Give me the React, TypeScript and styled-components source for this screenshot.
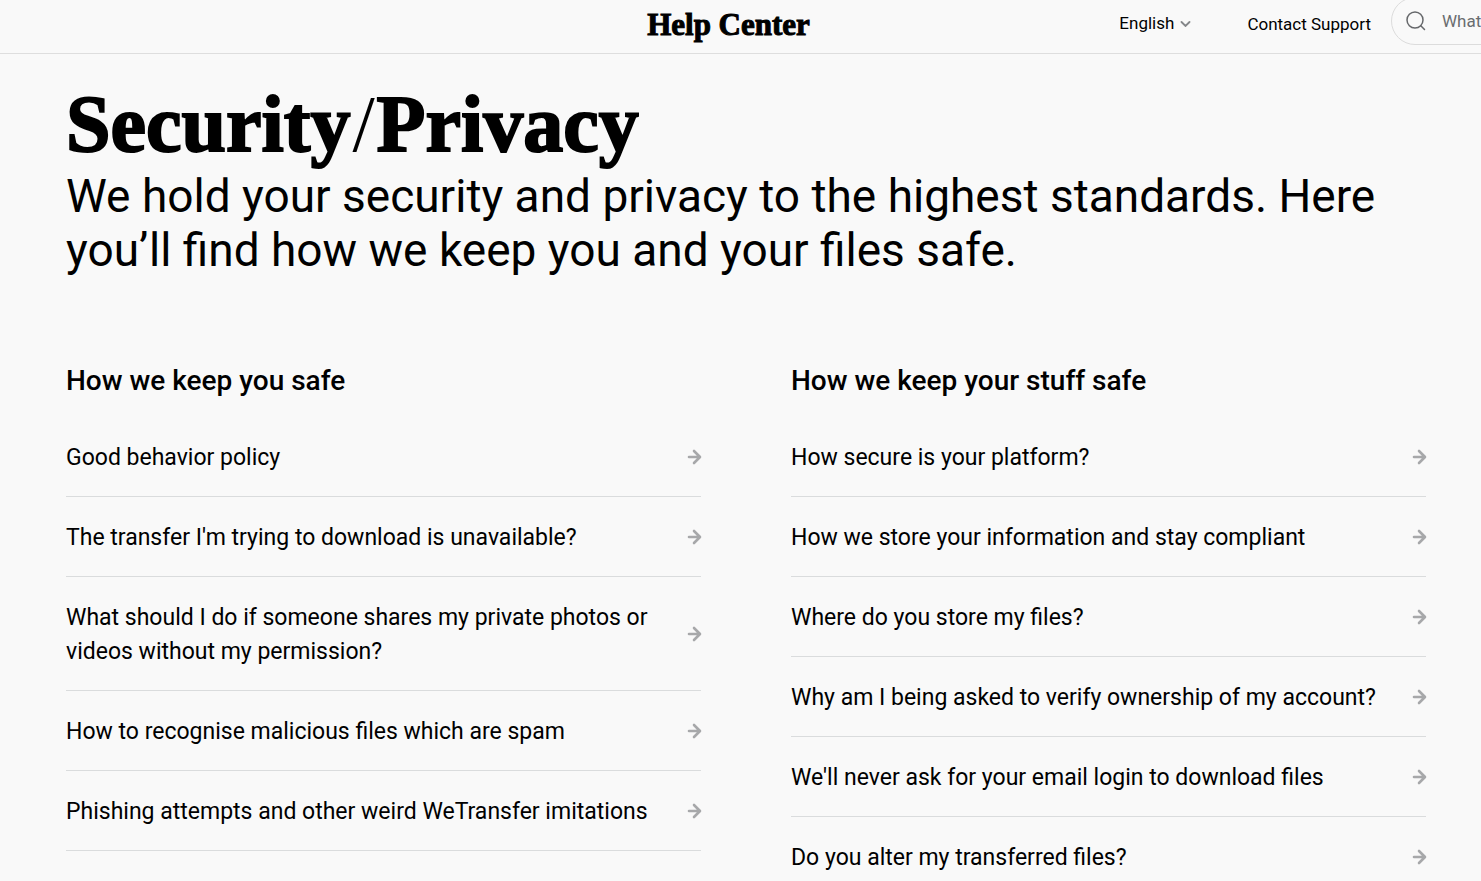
import React from "react";
import styled, { createGlobalStyle } from "styled-components";

const sans = `Roboto, "Liberation Sans", sans-serif`;
const serif = `"Liberation Serif", serif`;

const GlobalStyle = createGlobalStyle`
  *, *::before, *::after { box-sizing: border-box; }
  body {
    margin: 0;
    background: #f9f9f9;
    color: #000;
    font-family: ${sans};
    overflow-x: hidden;
  }
  h1, h2, p, ul { margin: 0; padding: 0; }
  a { color: inherit; text-decoration: none; }
`;

const Header = styled.header`
  display: grid;
  grid-template-columns: 1fr auto 1fr;
  align-items: center;
  align-content: start;
  height: 54px;
  padding-right: 24px;
  border-bottom: 1px solid #dedede;
  overflow: hidden;
`;

const Logo = styled.a`
  grid-column: 2;
  font: 700 31px/36px ${serif};
  -webkit-text-stroke: 1px #000;
  padding-top: 4px;
`;

const Tools = styled.div`
  display: flex;
  align-items: center;
  justify-content: flex-end;
  margin: -3px -224px 0 0;
  font-size: 17px;
  line-height: 20px;
`;

const Language = styled.button`
  display: flex;
  align-items: center;
  gap: 6px;
  margin: 4px 56px 0 0;
  padding: 0;
  border: 0;
  background: none;
  color: #000;
  font: inherit;
  white-space: nowrap;
`;

const Contact = styled.a`
  margin: 6px 20px 0 0;
  white-space: nowrap;
`;

const Search = styled.label`
  display: flex;
  flex: 0 0 290px;
  align-items: center;
  gap: 16px;
  height: 48px;
  padding-left: 14px;
  border: 1px solid #dcdcdc;
  border-radius: 24px;
`;

const SearchInput = styled.input`
  flex: 1;
  min-width: 0;
  padding: 0;
  border: 0;
  outline: 0;
  background: none;
  font: 17px/20px ${sans};
  &::placeholder { color: #6a6d70; opacity: 1; }
`;

const Main = styled.main`
  padding: 26px 55px 0 66px;
`;

const Title = styled.h1`
  font: 700 80px/89px ${serif};
  -webkit-text-stroke: 2px #000;
`;

const Slash = styled.span`
  margin: 0 2px;
  font-weight: 400;
  -webkit-text-stroke: 0;
`;

const Intro = styled.p`
  font-size: 46px;
  line-height: 54px;
`;

const Columns = styled.div`
  display: grid;
  grid-template-columns: 1fr 1fr;
  gap: 90px;
  padding-top: 86px;
`;

const SectionTitle = styled.h2`
  margin-bottom: 18px;
  font-size: 28px;
  font-weight: 500;
  line-height: 36px;
`;

const List = styled.ul`
  list-style: none;
`;

const ArticleLink = styled.a`
  display: flex;
  align-items: center;
  justify-content: space-between;
  gap: 32px;
  padding: 24px 0 21px;
  border-bottom: 1px solid #dadcdd;
  font-size: 23px;
  line-height: 34px;
`;

const ArrowIcon = styled.svg`
  flex: none;
  width: 14px;
  height: 16px;
  overflow: visible;
`;

const sections = [
  {
    title: "How we keep you safe",
    articles: [
      "Good behavior policy",
      "The transfer I'm trying to download is unavailable?",
      "What should I do if someone shares my private photos or videos without my permission?",
      "How to recognise malicious files which are spam",
      "Phishing attempts and other weird WeTransfer imitations",
    ],
  },
  {
    title: "How we keep your stuff safe",
    articles: [
      "How secure is your platform?",
      "How we store your information and stay compliant",
      "Where do you store my files?",
      "Why am I being asked to verify ownership of my account?",
      "We'll never ask for your email login to download files",
      "Do you alter my transferred files?",
    ],
  },
];

function Arrow() {
  return (
    <ArrowIcon viewBox="0 0 14 16" aria-hidden="true">
      <path d="M2 7H12.5M7 1l6 6-6 6" fill="none" stroke="#a7a8aa" strokeWidth="2.6" strokeLinecap="round" strokeLinejoin="round" />
    </ArrowIcon>
  );
}

export default function App() {
  return (
    <>
      <GlobalStyle />
      <Header>
        <Logo href="#">Help Center</Logo>
        <Tools>
          <Language type="button">
            English
            <svg width="11" height="8" viewBox="0 0 11 8" aria-hidden="true">
              <path d="M1.5 3l4 4 4-4" fill="none" stroke="#85878a" strokeWidth="1.8" strokeLinecap="round" />
            </svg>
          </Language>
          <Contact href="#">Contact Support</Contact>
          <Search>
            <svg width="20" height="20" viewBox="0 0 20 20" aria-hidden="true">
              <circle cx="9" cy="9" r="8" fill="none" stroke="#66686b" strokeWidth="1.5" />
              <path d="M14.8 14.8L18.5 18.5" stroke="#66686b" strokeWidth="1.5" strokeLinecap="round" />
            </svg>
            <SearchInput type="search" aria-label="Search" placeholder="What are you looking for?" />
          </Search>
        </Tools>
      </Header>
      <Main>
        <Title>
          Security<Slash>/</Slash>Privacy
        </Title>
        <Intro>
          We hold your security and privacy to the highest standards. Here you’ll find how we keep you and your files safe.
        </Intro>
        <Columns>
          {sections.map((section) => (
            <section key={section.title}>
              <SectionTitle>{section.title}</SectionTitle>
              <List>
                {section.articles.map((article) => (
                  <li key={article}>
                    <ArticleLink href="#">
                      <span>{article}</span>
                      <Arrow />
                    </ArticleLink>
                  </li>
                ))}
              </List>
            </section>
          ))}
        </Columns>
      </Main>
    </>
  );
}
